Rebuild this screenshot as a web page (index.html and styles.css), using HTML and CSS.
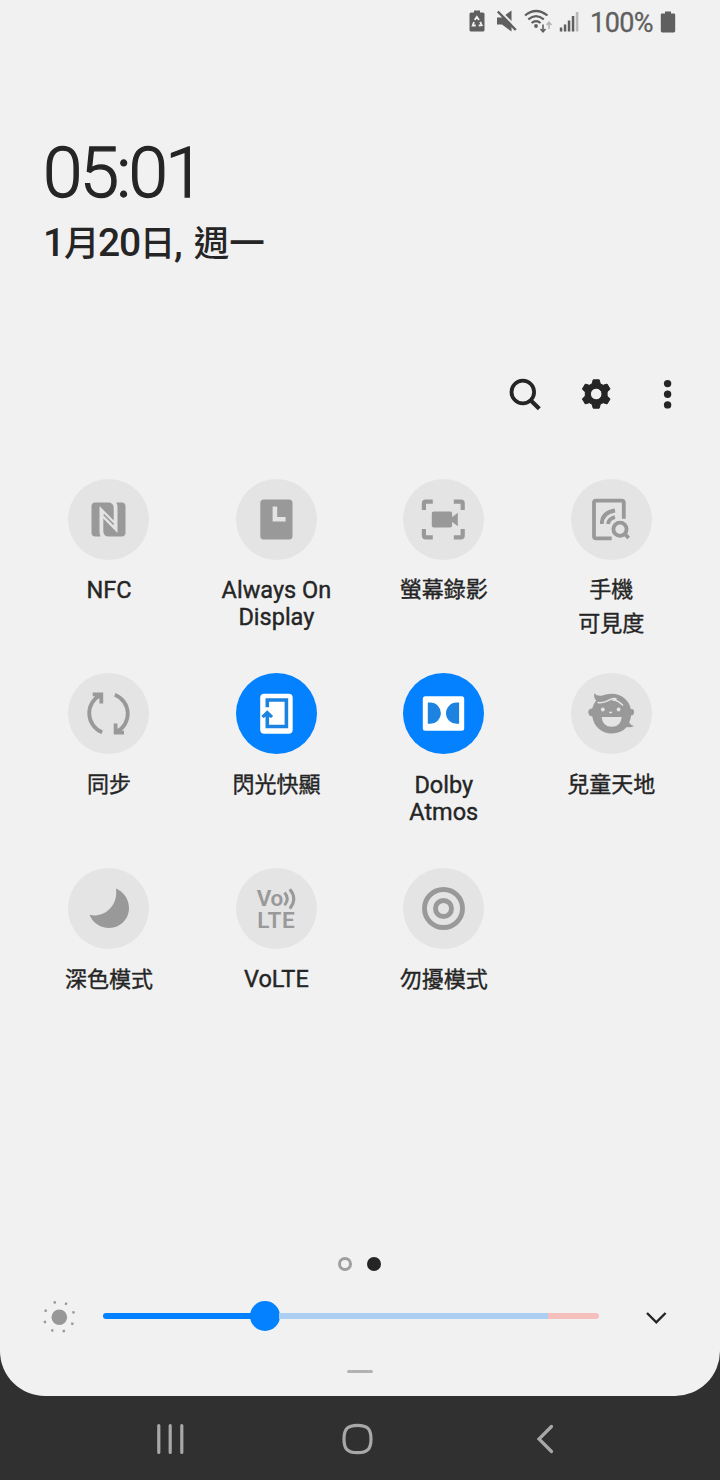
FILE: index.html
```html
<!DOCTYPE html>
<html lang="zh-Hant">
<head>
<meta charset="UTF-8" />
<meta name="viewport" content="width=device-width, initial-scale=1" />
<title>Quick Settings</title>
<link rel="stylesheet" href="styles.css">
</head>
<body>

<main class="panel">
  <div class="status-bar">
    <svg class="status-icons" viewBox="0 0 114 30">
      <!-- battery saver -->
      <path d="M4 3.500h3V1.500h6v2h3q1.500 0 1.500 1.500v16q0 1.500-1.500 1.500H4q-1.500 0-1.500-1.500V5q0-1.500 1.500-1.500z" />
      <path class="recycle" d="M7.700 11l2.100-3.100 2.200 3.200M13.200 12.900l1.500 3.300-3 .3M8.800 16.500H5.700l1.300-3.500" />
      <!-- muted -->
      <path d="M30 8.500h5l9.500-7v21l-9.500-7h-5z" />
      <path class="mute-gap" d="M31.500 .5l19.500 19.500" />
      <path class="mute-line" d="M30.800 2.500l18 18.500" />
      <!-- wifi -->
      <path class="wifi" d="M58 6.500q11-9 22.500 0M61.300 10.300q7.700-6.500 15.500 0M64.600 14q4.500-3.800 9 0" />
      <circle cx="69" cy="17" r="1.900" />
      <path class="arrow" d="M76 15.500v7M73.500 20l2.500 2.700 2.500-2.700" />
      <path class="arrow dim" d="M82 20v-6.500M79.500 16l2.500-2.700 2.500 2.700" />
      <!-- signal -->
      <path d="M92.800 18.500h2.500v4h-2.500zM96.800 15.500h2.500v7h-2.500zM100.800 11.500h2.500v11h-2.500zM104.800 7h2.500v15.500h-2.500z" />
      <path class="dim-fill" d="M108.800 3h2.600v19.500h-2.600z" />
    </svg>
    <span class="battery-text">100%</span>
    <svg class="battery" viewBox="0 0 16 23"><path d="M2 2.500h3V.5h6v2h3q1.200 0 1.200 1.200v16.400q0 1.400-1.400 1.400H2.200Q.8 21.500 .8 20.100V3.700Q.8 2.500 2 2.500z" /></svg>
  </div>

  <header class="clock">
    <div class="time">05:01</div>
    <div class="date">1<span class="zh">月</span>20<span class="zh">日</span>, <span class="zh week">週一</span></div>
  </header>

  <div class="actions">
    <svg viewBox="0 0 36 36"><circle cx="15.800" cy="16" r="11.300" fill="none" stroke="#252525" stroke-width="3.800" /><path d="M23.600 24.300l8.700 8.400" stroke="#252525" stroke-width="4.200" fill="none" /></svg>
    <svg viewBox="0 0 36 36"><path fill-rule="evenodd" stroke="#252525" stroke-width="1" stroke-linejoin="round" d="M14.200 3.800h6l1.100 4 2.800 1.500 4-1.200 3 5-3 2.800v4.200l3 2.800-3 5-4-1.200-2.800 1.500-1.100 4h-6l-1.100-4-2.800-1.500-4 1.200-3-5 3-2.800v-4.200l-3-2.800 3-5 4 1.200 2.800-1.500zM17.200 12.200a5.800 5.800 0 1 0 0 11.600 5.800 5.800 0 0 0 0-11.600z" /></svg>
    <svg viewBox="0 0 36 36"><circle cx="17.600" cy="7.600" r="3.700" /><circle cx="17.600" cy="18.300" r="3.700" /><circle cx="17.600" cy="28.900" r="3.700" /></svg>
  </div>

  <section class="tiles">
    <div class="tile">
      <svg class="icon" viewBox="0 0 81 81">
        <path d="M27.500 23.500H40q5.700 0 5.700 5.500v12.500L31.500 27v25.500q0 3 1 5h-5q-4 0-4-4v-26q0-4 4-4z" />
        <path d="M48.300 23.500h5.200q4 0 4 4v26q0 4-4 4H41q-5.700 0-5.700-5.500V39.500L49.500 54V28.500q0-3-1.200-5z" />
        <path class="stripe" d="M35.700 35.500l10 10" />
      </svg>
      <div class="label">NFC</div>
    </div>
    <div class="tile">
      <svg class="icon" viewBox="0 0 81 81">
        <rect x="24.300" y="20.500" width="32.200" height="40" rx="3.500" />
        <path class="hands" d="M38.900 27.500v12.700h10.700" />
      </svg>
      <div class="label">Always On<br>Display</div>
    </div>
    <div class="tile">
      <svg class="icon" viewBox="0 0 81 81">
        <path class="line thick" d="M29.800 22.600h-7q-1.900 0-1.900 1.900v6.500M50.800 22.600h7q1.900 0 1.900 1.900v6.500M29.800 58.400h-7q-1.900 0-1.900-1.900V50M50.800 58.400h7q1.900 0 1.900-1.900V50" />
        <rect x="28.800" y="32.500" width="20.300" height="16" rx="2" />
        <path d="M48 39l6.800-5.200v13.400L48 42z" />
      </svg>
      <div class="label zh-label">螢幕錄影</div>
    </div>
    <div class="tile">
      <svg class="icon" viewBox="0 0 81 81">
        <path class="line" d="M40.700 59.300H25q-2 0-2-2V23.600q0-2 2-2h25.800q2 0 2 2v16.200" />
        <path class="line" d="M30.800 45q0-11.500 13.200-13.500M37.100 45q.6-5.500 6.900-6.900" />
        <circle class="line" cx="49" cy="50.200" r="6.600" />
        <path class="line" d="M53.100 54.400l4.600 4.600" />
      </svg>
      <div class="label zh-label">手機<br>可見度</div>
    </div>

    <div class="tile">
      <svg class="icon" viewBox="0 0 81 81">
        <path class="line" d="M34.200 59.200A20.300 20.300 0 0 1 32.700 22M24.700 21.300h8.600v9.200M46.800 21.800A20.300 20.300 0 0 1 48.300 59M56 59.700h-8.400v-9.200" />
      </svg>
      <div class="label zh-label">同步</div>
    </div>
    <div class="tile on">
      <svg class="icon" viewBox="0 0 81 81">
        <rect x="24.200" y="20.700" width="32.500" height="40" rx="4" />
        <path class="cut" d="M31.300 34.300V27h19.100v26.500H31.300V42" />
        <path class="cut-fill" d="M31.200 37.200l5.900 5.700-2 2-3.900-2-3.800 2-2-2z" />
      </svg>
      <div class="label zh-label">閃光快顯</div>
    </div>
    <div class="tile on">
      <svg class="icon" viewBox="0 0 81 81">
        <rect x="19.800" y="23.300" width="41.400" height="34.400" rx="2.500" />
        <path class="cut-fill" d="M24.800 29.600h2.500a10.600 10.600 0 0 1 0 21.200h-2.500zM56.100 29.600h-2.500a10.600 10.600 0 0 0 0 21.200h2.500z" />
      </svg>
      <div class="label">Dolby<br>Atmos</div>
    </div>
    <div class="tile">
      <svg class="icon" viewBox="0 0 81 81">
        <path d="M23.300 20.300q3 3.400 8 2.300Q36 20.700 40.700 20.700c10 0 17.500 6.500 19.200 15.500q3-.7 3.200 2.800-.2 3.600-3 3.500-.4 4-2 7 1.500 2.500 4.700 3.500-3 1.800-7 1-5.500 6.400-15.100 6.400c-10 0-18-7-19.400-17q-3.800-.5-4.100-4.500.3-3.300 4-3.400 1-4.500 4-8-2.700-2.500-1.900-7.200z" />
        <path class="hair" d="M26.500 29.500q6 .8 11-2.200 4-2.500 8-1.500-2 .5-3 1.300 5 .5 9.500 5.500" />
        <g class="face"><circle cx="31.800" cy="36.500" r="1.900" /><circle cx="47.600" cy="36.500" r="1.900" /><path d="M37.800 38.700h3.600q-.4 1.800-1.800 1.800t-1.800-1.800zM30.700 44h20q-.7 9.800-10 9.800t-10-9.800z" /></g>
      </svg>
      <div class="label zh-label">兒童天地</div>
    </div>

    <div class="tile">
      <svg class="icon" viewBox="0 0 81 81">
        <path d="M48 20.600C55.900 24 61 31.500 61 40.300 61 51.200 52.200 60 41.300 60 32.400 60 24.400 54.600 21.600 46.700 36.400 50.500 50.400 38 48 20.600z" />
      </svg>
      <div class="label zh-label">深色模式</div>
    </div>
    <div class="tile">
      <svg class="icon" viewBox="0 0 81 81">
        <text><tspan x="20.800" y="37.500">Vo</tspan><tspan class="lte" x="21.300" y="59.800">LTE</tspan></text>
        <path class="line wave" d="M48.500 24.500q5.500 6.200 0 12.800M53.800 21.300q8 9.500 0 19.300" />
      </svg>
      <div class="label">VoLTE</div>
    </div>
    <div class="tile">
      <svg class="icon" viewBox="0 0 81 81">
        <circle class="line ring" cx="40.500" cy="40.500" r="19" />
        <circle class="line ring" cx="40.500" cy="40.500" r="8" />
      </svg>
      <div class="label zh-label">勿擾模式</div>
    </div>
  </section>

  <footer class="controls">
    <div class="pager"><span class="dot"></span><span class="dot active"></span></div>
    <div class="brightness">
      <svg class="sun" viewBox="0 0 34 34">
        <circle cx="17.300" cy="18.200" r="7.800" />
        <path d="M11.300 2.600l2.300-.6.600 2.300-2.300.6zM23.300 3.300l2.200.8-.8 2.200-2.200-.8zM30 12.500l2.300-.6.600 2.300-2.300.6zM29.500 23.300l2.300.8-.8 2.200-2.200-.8zM20.300 31.200l2.300-.6.600 2.300-2.300.6zM9.600 29.900l2.200.8-.8 2.200-2.200-.8zM1.500 22.100l2.300-.6.600 2.300-2.300.6zM3 10.300l2.200.8-.8 2.200-2.200-.8z" />
      </svg>
      <div class="slider"><div class="filled"></div><div class="knob"></div><div class="rest"></div><div class="limit"></div></div>
      <svg class="chevron" viewBox="0 0 22 14"><path d="M2 2l9.300 9.300L20.600 2" /></svg>
    </div>
    <div class="handle"></div>
  </footer>
</main>

<nav class="nav-bar">
  <svg viewBox="0 0 34 34"><path d="M4.800 3.500v27M16.200 3.500v27M27.800 3.500v27" /></svg>
  <svg viewBox="0 0 34 34"><path d="M16.500 3.300c10 0 13.500 3.500 13.500 13.700s-3.500 13.700-13.500 13.700-13.500-3.500-13.500-13.700 3.500-13.700 13.500-13.700z" /></svg>
  <svg viewBox="0 0 34 34"><path d="M22.500 4.500L10 17l12.500 12.500" /></svg>
</nav>

</body>
</html>
```
FILE: styles.css
```css
* {
  box-sizing: border-box;
}

body {
  margin: 0;
  height: 1480px;
  background: #303030;
  color: #252525;
  font-family: Roboto, "Noto Sans CJK TC", sans-serif;
}

svg {
  display: block;
}

.panel {
  display: flex;
  flex-direction: column;
  height: 1396px;
  background: #f1f1f1;
  border-radius: 0 0 45px 45px;
}

/* status bar */
.status-bar {
  display: flex;
  align-items: center;
  justify-content: flex-end;
  height: 44px;
  padding-right: 44px;
  color: #5f5f5f;
  fill: #5f5f5f;
}

.status-icons {
  width: 114px;
  height: 30px;
  margin: 4px 9px 0 0;
}

.status-icons .recycle {
  fill: none;
  stroke: #f1f1f1;
  stroke-width: 1.8;
}

.mute-gap {
  stroke: #f1f1f1;
  stroke-width: 2;
}

.mute-line {
  stroke: #5f5f5f;
  stroke-width: 2.4;
}

.wifi,
.arrow {
  fill: none;
  stroke: #5f5f5f;
  stroke-width: 2.2;
}

.arrow {
  stroke-width: 1.6;
}

.arrow.dim {
  stroke: #b5b5b5;
}

.dim-fill {
  fill: #b9b9b9;
}

.battery-text {
  padding-top: 1px;
  font-size: 27px;
  line-height: 44px;
  letter-spacing: -0.6px;
  -webkit-text-stroke: 0.3px #5f5f5f;
}

.battery {
  width: 16px;
  height: 23px;
  margin-left: 7px;
}

/* clock */
.clock {
  height: 326px;
  padding: 88px 0 0 43px;
}

.time {
  font-size: 71px;
  font-weight: 300;
  line-height: 82px;
  letter-spacing: -2.7px;
  -webkit-text-stroke: 1.3px #252525;
}

.date {
  margin-top: 7px;
  font-size: 39px;
  font-weight: 500;
  line-height: 44px;
  letter-spacing: -1.3px;
}

.date .zh {
  font-size: 35.5px;
}

.date .week {
  margin-left: 4px;
  letter-spacing: 0;
}

.actions {
  display: flex;
  justify-content: flex-end;
  gap: 35.5px;
  height: 108px;
  padding: 6px 34px 0 0;
}

.actions svg {
  width: 36px;
  height: 36px;
  fill: #252525;
}

/* quick setting tiles */
.tiles {
  display: grid;
  grid-template-columns: repeat(4, 167.4px);
  grid-auto-rows: 194.7px;
  padding: 0.5px 0 0 25.3px;
}

.tile {
  display: flex;
  flex-direction: column;
  align-items: center;
}

.icon {
  width: 81px;
  height: 81px;
  border-radius: 50%;
  background: #e4e4e4;
  fill: #999;
}

.tile.on .icon {
  background: #0381fe;
  fill: #fff;
}

.icon .line {
  fill: none;
  stroke: #999;
  stroke-width: 3.8;
}

.icon .thick {
  stroke-width: 4.2;
}

.icon .wave {
  stroke-width: 3;
}

.icon .ring {
  stroke-width: 4.9;
}

.stripe {
  fill: none;
  stroke: #999;
  stroke-width: 1.6;
}

.hands {
  fill: none;
  stroke: #e4e4e4;
  stroke-width: 4.6;
}

.cut {
  fill: none;
  stroke: #1c83e0;
  stroke-width: 3.6;
}

.cut-fill {
  fill: #1c83e0;
}

.hair {
  fill: none;
  stroke: #e4e4e4;
  stroke-width: 1.5;
}

.face {
  fill: #e4e4e4;
}

.icon text {
  font-size: 22.5px;
  font-weight: 600;
  letter-spacing: -0.5px;
}

.icon .lte {
  letter-spacing: 0.7px;
}

.label {
  margin-top: 17.6px;
  font-size: 23.5px;
  line-height: 27.3px;
  text-align: center;
  -webkit-text-stroke: 0.4px #252525;
}

.zh-label {
  margin-top: 13.7px;
  font-size: 22px;
  line-height: 34px;
}

/* pager and brightness */
.controls {
  margin-top: auto;
  height: 139.5px;
}

.pager {
  display: flex;
  justify-content: center;
  gap: 15px;
  padding-right: 1px;
}

.dot {
  width: 14.4px;
  height: 14.4px;
  border: 3px solid #9f9f9f;
  border-radius: 50%;
}

.dot.active {
  border: none;
  background: #252525;
}

.brightness {
  display: flex;
  align-items: center;
  height: 30px;
  margin-top: 30.2px;
  padding: 0 53px 0 42px;
}

.sun {
  width: 34px;
  height: 34px;
  fill: #979797;
}

.slider {
  display: flex;
  align-items: center;
  width: 496px;
  margin-left: 27.3px;
}

.filled {
  width: 148px;
  height: 6px;
  border-radius: 3px 0 0 3px;
  background: #0381fe;
}

.knob {
  width: 30px;
  height: 30px;
  margin-left: -1px;
  border-radius: 50%;
  background: #0381fe;
}

.rest {
  flex: 1;
  height: 6px;
  margin-left: -1px;
  background: #accef1;
}

.limit {
  width: 51px;
  height: 6px;
  border-radius: 0 3px 3px 0;
  background: #f4bfbd;
}

.chevron {
  width: 22px;
  height: 14px;
  margin: 3px 0 0 auto;
  fill: none;
  stroke: #252525;
  stroke-width: 2.4;
}

.handle {
  width: 26px;
  height: 3.5px;
  margin: 38.8px auto 0;
  border-radius: 2px;
  background: #b2b2b2;
}

/* navigation bar */
.nav-bar {
  display: flex;
  gap: 153.5px;
  padding: 26px 0 0 153.5px;
}

.nav-bar svg {
  width: 34px;
  height: 34px;
  fill: none;
  stroke: #a8a8a8;
  stroke-width: 3.2;
  stroke-linecap: round;
}
```
